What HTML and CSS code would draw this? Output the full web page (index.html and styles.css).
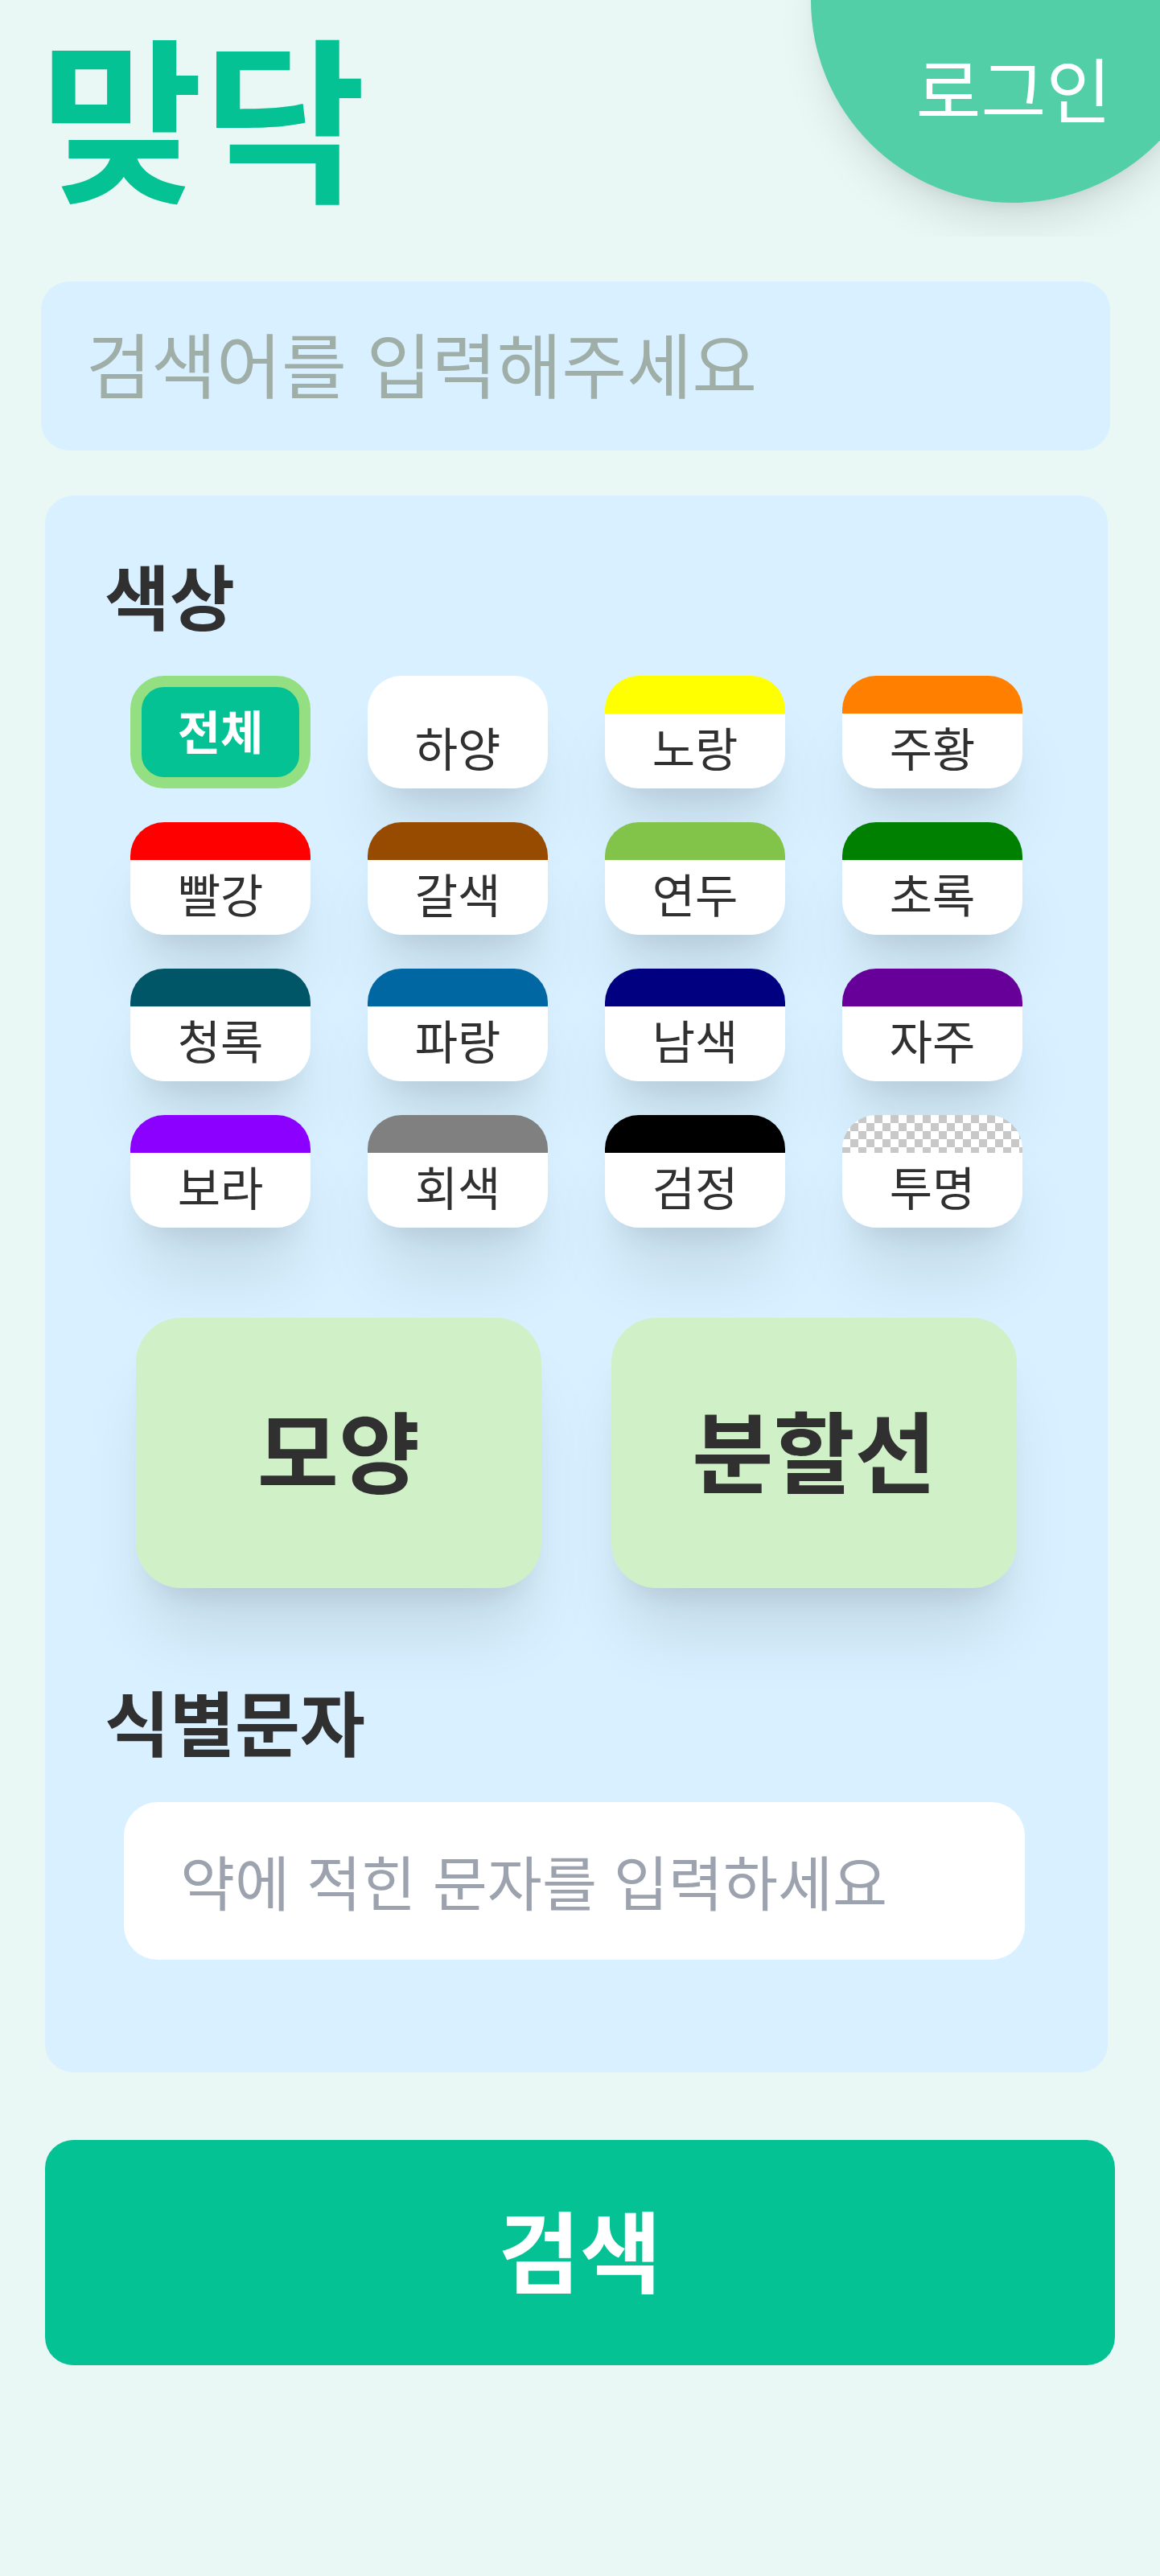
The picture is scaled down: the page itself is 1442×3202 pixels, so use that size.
FILE: index.html
```html
<!DOCTYPE html>
<html lang="ko">
<head>
<meta charset="utf-8">
<meta name="viewport" content="width=device-width, initial-scale=1">
<title>맞닥</title>
<link rel="stylesheet" href="styles.css">
</head>
<body>
<header class="header">
  <h1 class="logo">맞닥</h1>
  <div class="corner">
    <a class="login" href="#login">로그인</a>
  </div>
</header>
<main>
  <form class="search-form">
    <input class="keyword" type="search" aria-label="검색어" placeholder="검색어를 입력해주세요">
    <section class="panel">
      <h2 class="panel-title">색상</h2>
      <div class="colors">
        <button type="button" class="color selected" aria-pressed="true">전체</button>
        <button type="button" class="color white">하양</button>
        <button type="button" class="color yellow">노랑</button>
        <button type="button" class="color orange">주황</button>
        <button type="button" class="color red">빨강</button>
        <button type="button" class="color brown">갈색</button>
        <button type="button" class="color lime">연두</button>
        <button type="button" class="color green">초록</button>
        <button type="button" class="color teal">청록</button>
        <button type="button" class="color blue">파랑</button>
        <button type="button" class="color navy">남색</button>
        <button type="button" class="color magenta">자주</button>
        <button type="button" class="color violet">보라</button>
        <button type="button" class="color gray">회색</button>
        <button type="button" class="color black">검정</button>
        <button type="button" class="color clear">투명</button>
      </div>
      <div class="options">
        <button type="button" class="option">모양</button>
        <button type="button" class="option">분할선</button>
      </div>
      <h2 class="panel-title"><label for="imprint">식별문자</label></h2>
      <input class="imprint" id="imprint" type="text" placeholder="약에 적힌 문자를 입력하세요">
    </section>
    <button type="submit" class="submit">검색</button>
  </form>
</main>
</body>
</html>
```
FILE: styles.css
```css
* {
  box-sizing: border-box;
}

body {
  margin: 0;
  background: #e9f8f5;
  color: #303030;
  font-family: "Noto Sans CJK KR", sans-serif;
}

button,
input {
  border: 0;
  font: inherit;
  color: inherit;
}

.header {
  position: relative;
  height: 294px;
  padding: 0 50px;
}

.logo {
  margin: 0;
  color: #04c294;
  font-size: 220px;
  font-weight: 700;
  line-height: 278px;
}

/* Clips the login disc and its shadow to the header */
.corner {
  position: absolute;
  top: 0;
  right: 0;
  width: 504px;
  height: 294px;
  overflow: hidden;
}

.login {
  position: absolute;
  top: -252px;
  right: -70px;
  display: flex;
  justify-content: center;
  width: 504px;
  height: 504px;
  padding-top: 300px;
  border-radius: 50%;
  background: #53cfa7;
  box-shadow: 0 35px 52px -10px rgba(0, 0, 0, 0.1), 0 14px 21px -14px rgba(0, 0, 0, 0.1);
  color: #fff;
  font-size: 88px;
  line-height: 120px;
  text-decoration: none;
}

.search-form {
  display: flex;
  flex-direction: column;
  padding: 56px 56px 262px;
}

.keyword {
  height: 210px;
  margin: 0 6px 56px -5px;
  padding: 0 56px 12px;
  border-radius: 35px;
  background: #d8f0ff;
  font-size: 88px;
}

.keyword::placeholder {
  color: #a0aea8;
}

.panel {
  margin: 0 9px 84px 0;
  padding: 62px 74px 140px;
  border-radius: 35px;
  background: #d8f0ff;
}

.panel-title {
  margin: 0;
  font-size: 88px;
  font-weight: 700;
  line-height: 120px;
}

.colors {
  display: grid;
  grid-template-columns: repeat(4, 224px);
  justify-content: center;
  gap: 42px 71px;
  margin-top: 42px;
}

.color {
  height: 140px;
  padding: 36px 0 0;
  border-radius: 42px;
  background: linear-gradient(var(--swatch) 47px, #fff 47px);
  box-shadow: 0 70px 88px -18px rgba(0, 0, 0, 0.1), 0 28px 35px -21px rgba(0, 0, 0, 0.1);
  font-size: 58px;
  line-height: 84px;
}

.color.selected {
  padding: 0 0 6px;
  border: 14px solid #95df83;
  background: #04c294;
  box-shadow: none;
  color: #fff;
  font-weight: 700;
}

.white { --swatch: #fff; }
.yellow { --swatch: #ff0; }
.orange { --swatch: #ff8000; }
.red { --swatch: #f00; }
.brown { --swatch: #964b00; }
.lime { --swatch: #82c34a; }
.green { --swatch: #008000; }
.teal { --swatch: #005666; }
.blue { --swatch: #0067a3; }
.navy { --swatch: #000080; }
.magenta { --swatch: #660099; }
.violet { --swatch: #8b00ff; }
.gray { --swatch: #808080; }
.black { --swatch: #000; }

.color.clear {
  background:
    linear-gradient(transparent 47px, #fff 47px),
    repeating-conic-gradient(#fff 0 25%, #c8c8c8 0 50%) 0 0 / 20px 20px;
}

.options {
  display: flex;
  justify-content: center;
  gap: 87px;
  margin: 112px 0 104px;
}

.option {
  width: 504px;
  height: 336px;
  padding: 0 0 12px;
  border-radius: 56px;
  background: #d0f1c8;
  box-shadow: 0 70px 88px -18px rgba(0, 0, 0, 0.1), 0 28px 35px -21px rgba(0, 0, 0, 0.1);
  font-size: 110px;
  font-weight: 700;
}

.imprint {
  display: block;
  width: calc(100% - 53px);
  height: 196px;
  margin: 42px 0 0 24px;
  padding: 0 70px 4px;
  border-radius: 42px;
  background: #fff;
  font-size: 74px;
}

.imprint::placeholder {
  color: #9ca3af;
}

.submit {
  height: 280px;
  padding: 0 0 12px;
  border-radius: 35px;
  background: #04c294;
  color: #fff;
  font-size: 110px;
  font-weight: 700;
}
```
